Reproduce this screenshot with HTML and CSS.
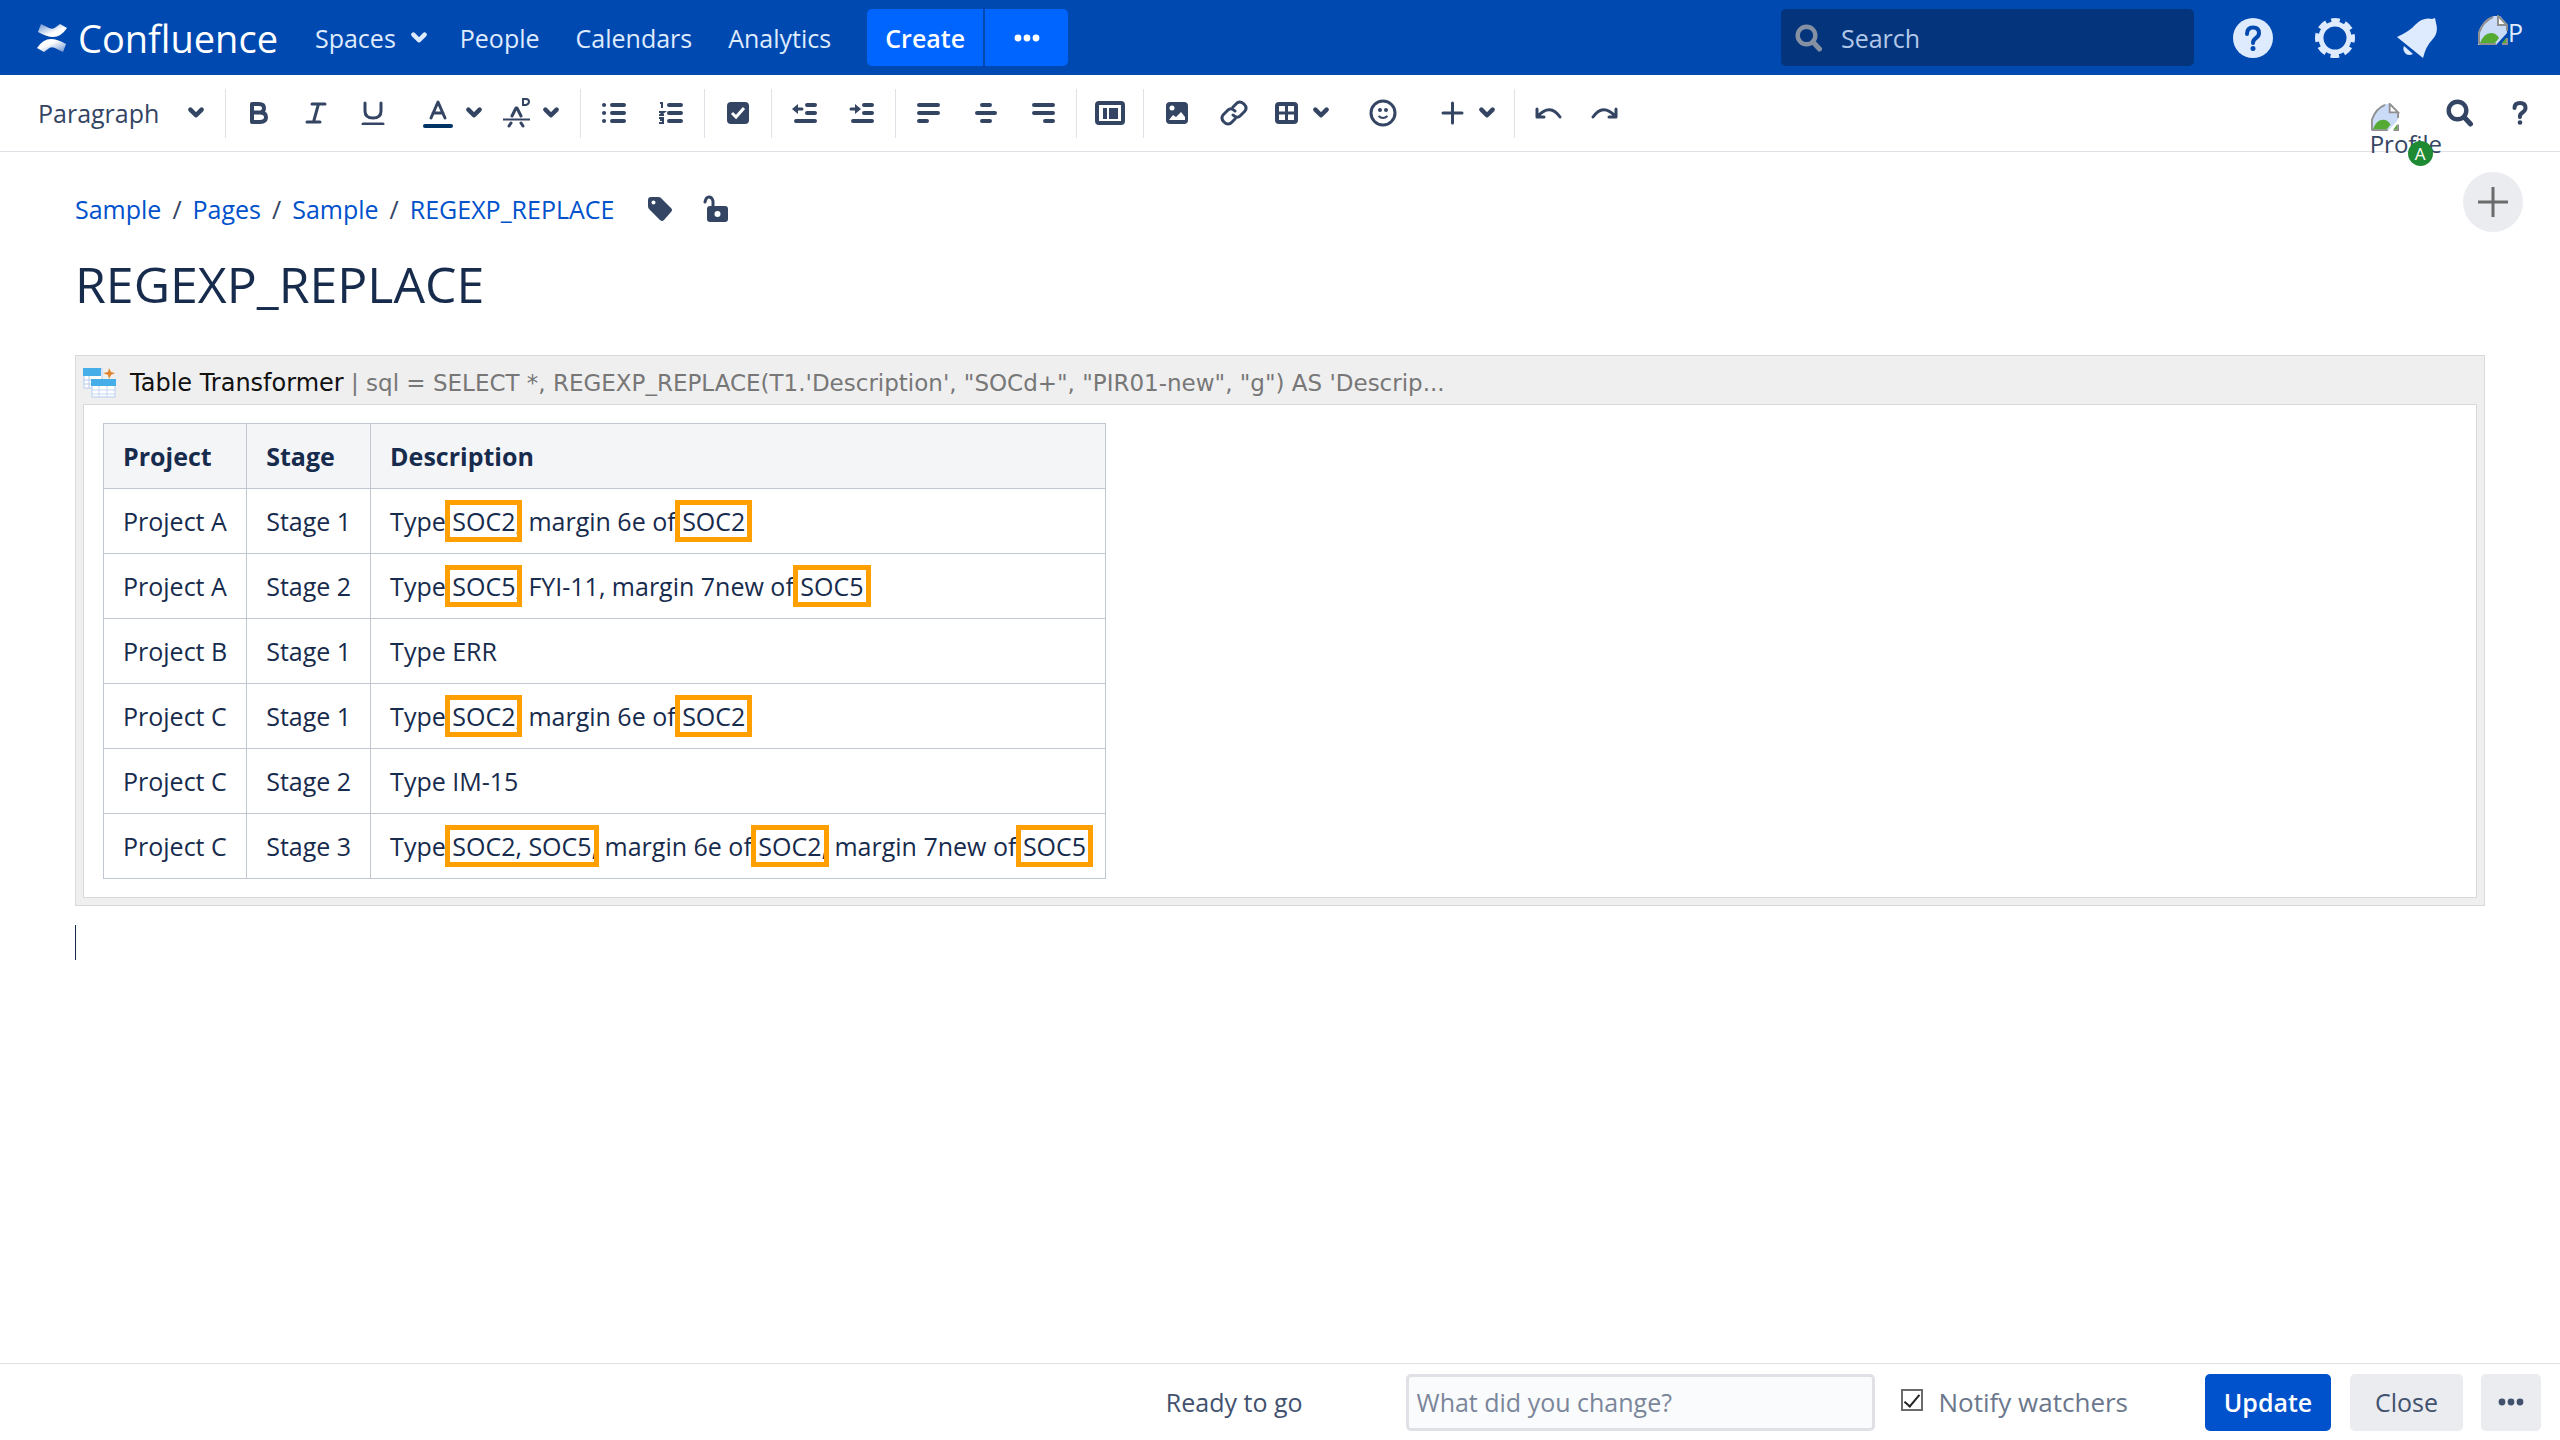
FILE: index.html
```html
<!DOCTYPE html>
<html lang="en">
<head>
    <meta charset="UTF-8">
    <meta name="viewport" content="width=device-width, initial-scale=1.0">
    <title>REGEXP_REPLACE - Confluence</title>
    <link rel="stylesheet" href="styles.css">
</head>
<body>

    <!-- Shared icons -->
    <svg class="sprite" width="0" height="0" aria-hidden="true">
        <symbol id="chevron" viewBox="0 0 16 16">
            <path d="M3 5l5 5 5-5" fill="none" stroke="currentColor" stroke-width="4" stroke-linecap="round" stroke-linejoin="round"/>
        </symbol>
        <symbol id="dots" viewBox="0 0 26 8">
            <circle cx="4" cy="4" r="3.4" fill="currentColor"/><circle cx="13" cy="4" r="3.4" fill="currentColor"/><circle cx="22" cy="4" r="3.4" fill="currentColor"/>
        </symbol>
        <symbol id="search" viewBox="0 0 28 28">
            <circle cx="11.500" cy="11.500" r="8.800" fill="none" stroke="currentColor" stroke-width="4.400"/>
            <path d="M18 18l6.500 7" stroke="currentColor" stroke-width="5" stroke-linecap="round"/>
        </symbol>
        <symbol id="broken" viewBox="0 0 30 30">
            <path d="M0 30V18Q4 5 16 1h6l7 8v9L18 30z" fill="#c9dbf7"/>
            <path d="M1 29V18Q5 6 15 2M1 29h17M29 10v6M24 29h5v-6" fill="none" stroke="#8f8f8f" stroke-width="2"/>
            <path d="M20 1v9h9z" fill="#fff" stroke="#8f8f8f" stroke-width="2"/>
            <path d="M2 28q4-10 11-10 5 0 8 5l-4 5zM24 28l4-5v5z" fill="#55aa33"/>
        </symbol>
    </svg>

    <header class="header">
        <a class="logo" href="#">
            <svg width="30" height="30" viewBox="0 0 30 30">
                <defs>
                    <linearGradient id="g1" x1="0" y1="0" x2="1" y2="1"><stop offset="0" stop-color="#fff" stop-opacity=".4"/><stop offset=".6" stop-color="#fff"/></linearGradient>
                    <linearGradient id="g2" x1="1" y1="1" x2="0" y2="0"><stop offset="0" stop-color="#fff" stop-opacity=".4"/><stop offset=".6" stop-color="#fff"/></linearGradient>
                </defs>
                <path d="M4 1l8 4q4 2 7-1l4-3 7 4q-6 9-14 9-6 0-15-5z" fill="url(#g1)"/>
                <path d="M26 29l-8-4q-4-2-7 1l-4 3-7-4q6-9 14-9 6 0 15 5z" fill="url(#g2)"/>
            </svg>
            <span class="logo-text">Confluence</span>
        </a>
        <nav class="nav">
            <a href="#">Spaces <svg width="18" height="18"><use href="#chevron"/></svg></a>
            <a href="#">People</a>
            <a href="#">Calendars</a>
            <a href="#">Analytics</a>
        </nav>
        <div class="create">
            <button class="create-main">Create</button>
            <button class="create-more" aria-label="Create from template"><svg width="26" height="8"><use href="#dots"/></svg></button>
        </div>
        <div class="search">
            <svg width="28" height="28"><use href="#search"/></svg>
            <input type="text" placeholder="Search" aria-label="Search">
        </div>
        <div class="header-icons">
            <button aria-label="Help">
                <svg width="42" height="42" viewBox="0 0 42 42">
                    <circle cx="21" cy="21" r="20" fill="#deebff"/>
                    <path d="M15 17q0-6.500 6-6.500t6 5.500q0 3-3 5t-3 5" fill="none" stroke="#0049b0" stroke-width="4" stroke-linecap="round"/>
                    <circle cx="21" cy="31.500" r="2.500" fill="#0049b0"/>
                </svg>
            </button>
            <button aria-label="Settings">
                <svg width="42" height="42" viewBox="0 0 42 42">
                    <circle cx="21" cy="21" r="17.500" fill="none" stroke="#deebff" stroke-width="5" stroke-dasharray="8.500 5.244" stroke-dashoffset="4.250"/>
                    <circle cx="21" cy="21" r="14" fill="none" stroke="#deebff" stroke-width="5"/>
                </svg>
            </button>
            <button aria-label="Notifications">
                <svg width="42" height="42" viewBox="0 0 42 42">
                    <path d="M1 20Q14 14 19 8 27 0 36 2l3-1 1 5q3 10-4 17-6 6-9 18z" fill="#deebff"/>
                    <path d="M8 29l9 8q-4 2-7 0-4-4-2-8z" fill="#deebff"/>
                </svg>
            </button>
            <button class="user" aria-label="User menu">
                <svg width="30" height="30"><use href="#broken"/></svg><span>P</span>
            </button>
        </div>
    </header>

    <div class="toolbar">
        <div class="format">
            <select aria-label="Text style">
                <option>Paragraph</option>
            </select>
            <svg width="18" height="18"><use href="#chevron"/></svg>
        </div>
        <div class="group">
            <button aria-label="Bold"><svg width="24" height="24" viewBox="0 0 24 24"><path d="M5 3v18M5 3h7q5 0 5 4.200t-5 4.300H5h8q6 0 6 4.700T13 21H5" class="l4"/></svg></button>
            <button aria-label="Italic"><svg width="24" height="24" viewBox="0 0 24 24"><path d="M8 3h13M3 21h13M14.500 3l-5 18" class="l3"/></svg></button>
            <button aria-label="Underline"><svg width="24" height="24" viewBox="0 0 24 24"><path d="M4 2v8q0 7 8 7t8-7V2" class="l3"/><path d="M2 23h20" class="l3"/></svg></button>
            <div class="menus">
                <button class="drop" aria-label="Text colour"><svg width="30" height="30" viewBox="0 0 30 30"><path d="M8 20L15 4l7 16M10 15h10" class="l3"/><rect y="26" width="30" height="4" rx="2" fill="#003366"/></svg><svg width="18" height="18"><use href="#chevron"/></svg></button>
                <button class="drop" aria-label="More formatting"><svg width="27" height="32" viewBox="0 0 27 32"><path d="M9 19l4-8h1l4 8M6 29l2-3M18 26l2 3" class="l3"/><path d="M0 22.500h27" class="l2"/><path d="M20 2h3q3 0 3 2.500T23 8h-3z" class="l2"/></svg><svg width="18" height="18"><use href="#chevron"/></svg></button>
            </div>
        </div>
        <div class="group">
            <button aria-label="Bullet list"><svg width="24" height="24" viewBox="0 0 24 24"><path d="M10 4h12M10 12h12M10 20h12" class="l4"/><path d="M2 4h.1M2 12h.1M2 20h.1" class="l4"/></svg></button>
            <button aria-label="Numbered list"><svg width="24" height="24" viewBox="0 0 24 24"><path d="M10 4h12M10 12h12M10 20h12" class="l4"/><path d="M1 2h2v5M0 11h5l-4 3h4M0 17h4v5H0M1 19h3" class="l2"/></svg></button>
        </div>
        <div class="group">
            <button aria-label="Task list"><svg width="24" height="24" viewBox="0 0 24 24"><rect x="1" y="1" width="22" height="22" rx="4" fill="currentColor"/><path d="M6 12l4 4 8-9" fill="none" stroke="#fff" stroke-width="3"/></svg></button>
        </div>
        <div class="group">
            <button aria-label="Outdent"><svg width="26" height="24" viewBox="0 0 26 24"><path d="M15 4h8M15 12h8M4 20h19" class="l4"/><path d="M3 8h7" class="l3"/><path d="M6 3v10L0 8z" fill="currentColor"/></svg></button>
            <button aria-label="Indent"><svg width="26" height="24" viewBox="0 0 26 24"><path d="M15 4h8M15 12h8M4 20h19" class="l4"/><path d="M2 8h6" class="l3"/><path d="M6 3v10l6-5z" fill="currentColor"/></svg></button>
        </div>
        <div class="group">
            <button aria-label="Align left"><svg width="24" height="24" viewBox="0 0 24 24"><path d="M2 4h19M2 12h19M2 20h8" class="l4"/></svg></button>
            <button aria-label="Align center"><svg width="24" height="24" viewBox="0 0 24 24"><path d="M8 4h8M3 12h18M8 20h8" class="l4"/></svg></button>
            <button aria-label="Align right"><svg width="24" height="24" viewBox="0 0 24 24"><path d="M3 4h19M3 12h19M14 20h8" class="l4"/></svg></button>
        </div>
        <div class="group">
            <button aria-label="Page layout"><svg width="30" height="24" viewBox="0 0 30 24"><rect x="2" y="2" width="26" height="20" rx="2" class="l4"/><path d="M8 7h4v11H8zM14 7h9v11h-9z" fill="currentColor"/></svg></button>
        </div>
        <div class="group insert">
            <button aria-label="Insert image"><svg width="24" height="24" viewBox="0 0 24 24"><rect x="1" y="1" width="22" height="22" rx="4" fill="currentColor"/><circle cx="7" cy="7" r="2.500" fill="#fff"/><path d="M4 19l4-5 3 2 5-5 4 5v3z" fill="#fff"/></svg></button>
            <button aria-label="Insert link"><svg width="28" height="28" viewBox="0 0 28 28"><path d="M13 8l4-4q3.500-2.500 7 1t1 7l-5 5q-3 3-7-1M15 20l-4 4q-3.500 2.500-7-1t-1-7l5-5q3-3 7 1" class="l3"/></svg></button>
            <button class="drop" aria-label="Insert table"><svg width="23" height="24" viewBox="0 0 23 24"><rect x="2" y="3" width="19" height="18" rx="2" class="l4"/><path d="M11.500 3v18M2 12h19" class="l3"/></svg><svg width="18" height="18"><use href="#chevron"/></svg></button>
            <button class="emoji" aria-label="Insert emoji"><svg width="28" height="28" viewBox="0 0 28 28"><circle cx="14" cy="14" r="12" class="l3"/><circle cx="11" cy="11" r="2" fill="currentColor"/><circle cx="17" cy="11" r="2" fill="currentColor"/><path d="M9.500 17q4.500 4 9 0" class="l2"/></svg></button>
            <button class="drop" aria-label="Insert more"><svg width="23" height="24" viewBox="0 0 23 24"><path d="M11.500 2v20M2 12h19" class="l3"/></svg><svg width="18" height="18"><use href="#chevron"/></svg></button>
        </div>
        <div class="group">
            <button aria-label="Undo"><svg width="28" height="24" viewBox="0 0 28 24"><path d="M3 8v8h7M4 15Q16 2 26 16" class="l3"/></svg></button>
            <button aria-label="Redo"><svg width="28" height="24" viewBox="0 0 28 24"><path d="M25 8v8h-7M24 15Q12 2 2 16" class="l3"/></svg></button>
        </div>
        <div class="toolbar-right">
            <div class="profile">
                <svg width="30" height="28"><use href="#broken"/></svg>
                <span>Profile</span>
                <b class="badge">A</b>
            </div>
            <button class="find" aria-label="Find"><svg width="28" height="28"><use href="#search"/></svg></button>
            <button class="help" aria-label="Editor help"><svg width="16" height="24" viewBox="0 0 16 24"><path d="M2.500 7q0-5 5.500-5t5.500 5q0 2.500-3 4.500T8 16" class="l4"/><circle cx="8" cy="21.500" r="2.300" fill="currentColor"/></svg></button>
        </div>
    </div>

    <main class="editor">
        <div class="page-top">
            <nav class="breadcrumb">
                <a href="#">Sample</a><span>/</span><a href="#">Pages</a><span>/</span><a href="#">Sample</a><span>/</span><a href="#">REGEXP_REPLACE</a>
                <button aria-label="Labels"><svg width="26" height="26" viewBox="0 0 26 26"><path d="M1 4q0-3 3-3h7q2 0 3 1l10 10q2 2 0 4l-7 8q-2 2-4 0L2 13q-1-1-1-3z" fill="currentColor"/><circle cx="6.500" cy="6.500" r="2" fill="#fff"/></svg></button>
                <button aria-label="Restrictions"><svg width="26" height="28" viewBox="0 0 26 28"><rect x="4" y="11" width="21" height="16" rx="3" fill="currentColor"/><path d="M10 12V6q-1-4-4-4T2 7" class="l3"/><circle cx="14.500" cy="19" r="3" fill="#fff"/></svg></button>
            </nav>
            <button class="add" aria-label="Add">
                <svg width="30" height="30" viewBox="0 0 30 30"><path d="M15 0v30M0 15h30" stroke="#6b6b6b" stroke-width="3"/></svg>
            </button>
        </div>

        <h1>REGEXP_REPLACE</h1>

        <div class="macro">
            <div class="macro-title">
                <svg width="34" height="30" viewBox="0 0 34 30">
                    <rect x="1" y="1" width="18" height="19" fill="#fff" stroke="#b5cdf0"/>
                    <rect width="18" height="8" fill="#45aee8"/>
                    <path d="M1 12h9M1 16h9M6 8v12" stroke="#b5cdf0"/>
                    <rect x="9" y="12" width="23" height="17" fill="#fff" stroke="#b5cdf0"/>
                    <rect x="8" y="11" width="25" height="7" fill="#45aee8"/>
                    <path d="M9 22h23M9 26h23M16 18v11M24 18v11" stroke="#c3d6f2"/>
                    <path d="M26 0l2 4 4 1-4 2-2 4-1-4-5-2 5-1z" fill="#e0852f"/>
                </svg>
                <span><span class="macro-name">Table Transformer</span> | sql = SELECT *, REGEXP_REPLACE(T1.'Description', "SOCd+", "PIR01-new", "g") AS 'Descrip...</span>
            </div>
            <div class="macro-body">
                <table>
                    <thead>
                        <tr><th>Project</th><th>Stage</th><th>Description</th></tr>
                    </thead>
                    <tbody>
                        <tr><td>Project A</td><td>Stage 1</td><td>Type <mark>SOC2</mark>, margin 6e of <mark>SOC2</mark></td></tr>
                        <tr><td>Project A</td><td>Stage 2</td><td>Type <mark>SOC5</mark>, FYI-11, margin 7new of <mark>SOC5</mark></td></tr>
                        <tr><td>Project B</td><td>Stage 1</td><td>Type ERR</td></tr>
                        <tr><td>Project C</td><td>Stage 1</td><td>Type <mark>SOC2</mark>, margin 6e of <mark>SOC2</mark></td></tr>
                        <tr><td>Project C</td><td>Stage 2</td><td>Type IM-15</td></tr>
                        <tr><td>Project C</td><td>Stage 3</td><td>Type <mark>SOC2, SOC5</mark>, margin 6e of <mark>SOC2</mark>, margin 7new of <mark>SOC5</mark></td></tr>
                    </tbody>
                </table>
            </div>
        </div>
        <div class="caret"></div>
    </main>

    <footer class="footer">
        <span class="status">Ready to go</span>
        <input class="comment" type="text" placeholder="What did you change?" aria-label="What did you change?">
        <input class="notify" type="checkbox" id="notify" checked>
        <label for="notify">Notify watchers</label>
        <button class="update">Update</button>
        <button class="close">Close</button>
        <button class="more" aria-label="More"><svg width="26" height="8"><use href="#dots"/></svg></button>
    </footer>

</body>
</html>
```
FILE: styles.css
```css
* {
    box-sizing: border-box;
}
body {
    display: flex;
    flex-direction: column;
    min-height: 100vh;
    margin: 0;
    font-family: "Open Sans", "Noto Sans", sans-serif;
    font-size: 25px;
    line-height: 36px;
    color: #172b4d;
    background-color: #fff;
}
button, input, select {
    font: inherit;
    color: inherit;
    margin: 0;
    padding: 0;
    border: none;
    background: none;
}
button {
    display: flex;
    align-items: center;
    justify-content: center;
    cursor: pointer;
}
a {
    color: #0052cc;
    text-decoration: none;
}
svg {
    display: block;
    flex: none;
}
.sprite {
    position: absolute;
}

/* Icon strokes */
.l2, .l3, .l4 {
    fill: none;
    stroke: currentColor;
    stroke-width: 2px;
}
.l3 {
    stroke-width: 3px;
}
.l4 {
    stroke-width: 4px;
}
.l3, .l4 {
    stroke-linecap: round;
    stroke-linejoin: round;
}

/* Header */
.header {
    display: flex;
    align-items: center;
    height: 75px;
    padding: 0 37px;
    color: #deebff;
    background-color: #0049b0;
}
.logo {
    display: flex;
    align-items: center;
    gap: 11px;
    color: #fff;
}
.logo-text {
    font-size: 38px;
}
.nav {
    display: flex;
    gap: 36px;
    margin-left: 37px;
}
.nav a {
    display: flex;
    align-items: center;
    gap: 14px;
    color: #deebff;
}
.nav a:first-child {
    margin-right: -4px;
}
.create {
    display: flex;
    gap: 2px;
    margin-left: 36px;
}
.create button {
    height: 57px;
    color: #fff;
    font-weight: 600;
    background-color: #0065ff;
}
.create .create-main {
    width: 116px;
    border-radius: 5px 0 0 5px;
}
.create .create-more {
    width: 83px;
    border-radius: 0 5px 5px 0;
}
.search {
    display: flex;
    align-items: center;
    gap: 18px;
    width: 413px;
    height: 57px;
    margin-left: auto;
    padding: 0 14px;
    border-radius: 5px;
    color: #8590a2;
    background-color: #04357c;
}
.search input {
    flex: 1;
    min-width: 0;
}
.search input::placeholder {
    color: #b3c8e8;
    opacity: 1;
}
.header-icons {
    display: flex;
    align-items: center;
    gap: 40px;
    margin-left: 38px;
}
.header-icons .user {
    align-items: flex-end;
    margin-bottom: 15px;
}
.user span {
    line-height: 26px;
}

/* Editor toolbar */
.toolbar {
    display: flex;
    align-items: center;
    height: 77px;
    padding: 0 32px 0 38px;
    border-bottom: 1px solid #dfe1e6;
    color: #344563;
}
.format {
    display: grid;
    align-items: center;
    width: 187px;
}
.format select, .format svg {
    grid-area: 1 / 1;
}
.format select {
    appearance: none;
    width: 100%;
}
.format svg {
    justify-self: end;
    margin-right: 20px;
    pointer-events: none;
}
.group {
    display: flex;
    align-items: center;
    height: 49px;
    padding: 0 5px 0 4px;
    border-left: 1px solid #dfe1e6;
}
.group button {
    width: 57px;
    height: 49px;
}
.menus {
    display: flex;
    padding: 0 8px 0 9px;
}
.group .drop {
    gap: 12px;
    width: auto;
    padding: 0 7px 0 13px;
}
.insert {
    padding-right: 11px;
}
.insert .drop {
    gap: 14px;
}
.group .emoji {
    margin: 0 17px;
}
.toolbar-right {
    display: flex;
    align-items: center;
    margin-left: auto;
}
.profile {
    position: relative;
    height: 20px;
    font-size: 24px;
    line-height: 26px;
}
.badge {
    position: absolute;
    top: 38px;
    left: 38px;
    width: 25px;
    height: 25px;
    border-radius: 50%;
    font-size: 17px;
    font-weight: 400;
    line-height: 25px;
    text-align: center;
    color: #fff;
    background-color: #1f8a34;
}
.find {
    margin-left: 4px;
}
.help {
    margin-left: 38px;
}

/* Page */
.editor {
    flex: 1;
    padding: 20px 75px 0;
    background-color: #fff;
}
.page-top {
    display: flex;
    justify-content: space-between;
    height: 76px;
    margin-right: -38px;
}
.breadcrumb {
    display: flex;
    align-items: center;
    height: 74px;
    color: #344563;
}
.breadcrumb span {
    padding: 0 11px;
}
.breadcrumb button {
    margin-left: 33px;
}
.breadcrumb button + button {
    margin-left: 30px;
}
.add {
    width: 60px;
    height: 60px;
    border-radius: 50%;
    background-color: #ebecf0;
}
h1 {
    margin: 0 0 34px;
    font-size: 50px;
    font-weight: 400;
    line-height: 73px;
}
.macro {
    padding: 0 7px 7px;
    border: 1px solid #d9d9d9;
    background-color: #efefef;
}
.macro-title {
    display: flex;
    align-items: center;
    gap: 13px;
    height: 48px;
    padding-top: 5px;
    font-family: "DejaVu Sans", sans-serif;
    font-size: 23px;
    color: #777;
}
.macro-name {
    font-size: 24px;
    color: #111;
}
.macro-body {
    padding: 18px 19px;
    border: 1px solid #d9d9d9;
    background-color: #fff;
}
table {
    border-collapse: collapse;
}
th, td {
    height: 65px;
    padding: 0 19px;
    border: 1px solid #c1c7d0;
    text-align: left;
}
th {
    font-weight: 700;
    background-color: #f4f5f7;
}
mark {
    display: inline-block;
    position: relative;
    line-height: 28px;
    color: inherit;
    background: none;
    outline: 5px solid #ffa000;
    outline-offset: 2px;
}
.caret {
    width: 1px;
    height: 35px;
    margin-top: 19px;
    background-color: #172b4d;
}

/* Footer */
.footer {
    display: flex;
    align-items: center;
    justify-content: flex-end;
    height: 77px;
    padding: 0 19px;
    border-top: 1px solid #dfe1e6;
    color: #42526e;
}
.comment {
    width: 469px;
    height: 57px;
    margin: 0 26px 0 103px;
    padding: 0 8px;
    border: 3px solid #dfe1e6;
    border-radius: 5px;
    background-color: #fafbfc;
}
.comment::placeholder {
    color: #7a869a;
    opacity: 1;
}
.notify {
    display: grid;
    place-items: center;
    appearance: none;
    width: 22px;
    height: 22px;
    margin: 0 16px 4px 0;
    border: 2px solid #6b6b6b;
}
.notify:checked::before {
    content: "";
    width: 6px;
    height: 14px;
    margin-bottom: 4px;
    border: solid #222;
    border-width: 0 2px 2px 0;
    rotate: 40deg;
}
.footer label {
    font-size: 26px;
    color: #6b778c;
}
.footer button {
    height: 57px;
    border-radius: 5px;
    background-color: #ebecf0;
}
.footer .update {
    width: 126px;
    margin-left: 77px;
    font-weight: 600;
    color: #fff;
    background-color: #0052cc;
}
.footer .close {
    width: 113px;
    margin: 0 18px 0 19px;
}
.footer .more {
    width: 60px;
}
```
